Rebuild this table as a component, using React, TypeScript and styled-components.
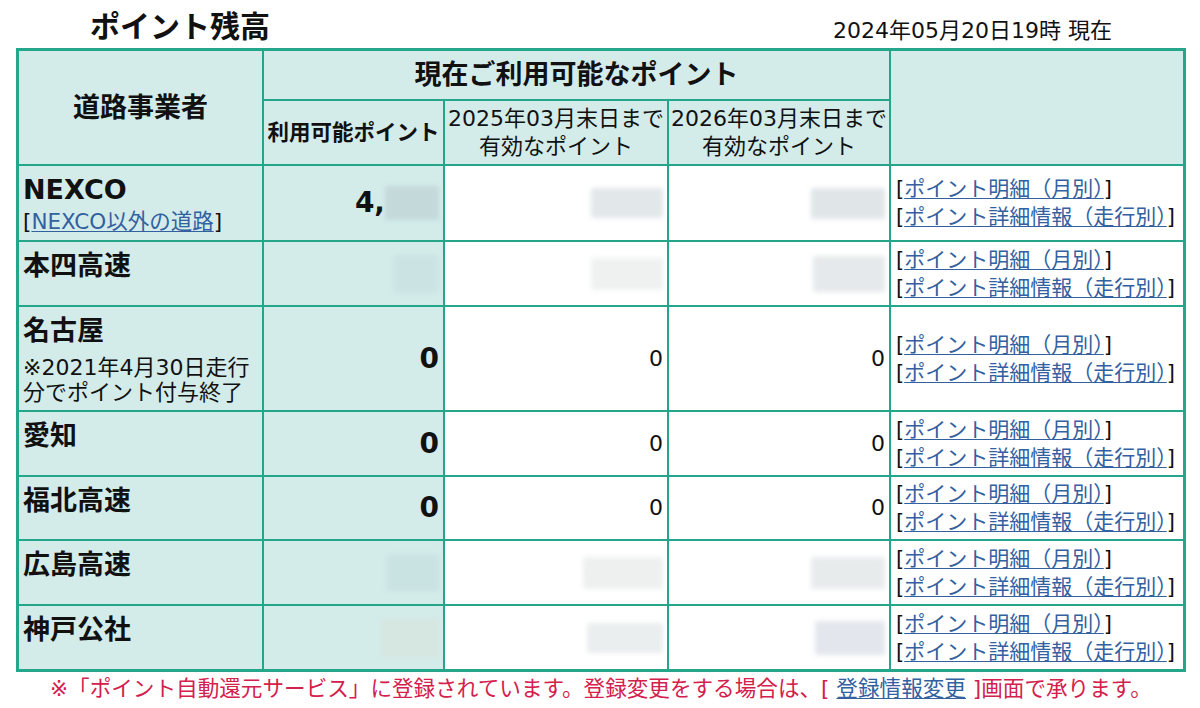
import React from 'react';
import styled, { createGlobalStyle } from 'styled-components';

const TEAL = '#25a68b';
const TINT = '#d3ecea';

const Global = createGlobalStyle`
  html, body { margin: 0; padding: 0; background: #fff; }
  body {
    font-family: "DejaVu Sans", "Noto Sans CJK JP", sans-serif;
    color: #111;
  }
`;

const Page = styled.div`
  width: 1170px;
  margin-left: 16px;
`;

const TitleBar = styled.header`
  height: 48px;
  box-sizing: border-box;
  padding: 0 74px;
  display: flex;
  justify-content: space-between;
  align-items: flex-start;
`;

const Title = styled.h1`
  margin: 6px 0 0;
  font-family: "Noto Sans CJK JP", sans-serif;
  font-size: 30px;
  line-height: 36px;
  font-weight: 700;
`;

const Stamp = styled.div`
  margin-top: 17px;
  font-size: 22px;
  line-height: 28px;
`;

const Grid = styled.div`
  display: grid;
  grid-template-columns: 245px 181px 224px 222px 292px;
  grid-template-rows: 50px 65px 76px 65px 105px 65px 64px 65px 63px;
  border: 3px solid ${TEAL};
  background: #fff;
`;

type CellProps = { $lastCol?: boolean; $lastRow?: boolean; $rows?: number; $cols?: number };

const CellBase = styled.div<CellProps>`
  box-sizing: border-box;
  min-width: 0;
  display: flex;
  flex-direction: column;
  border-right: ${p => (p.$lastCol ? 'none' : `2px solid ${TEAL}`)};
  border-bottom: ${p => (p.$lastRow ? 'none' : `2px solid ${TEAL}`)};
  ${p => (p.$rows ? `grid-row: span ${p.$rows};` : '')}
  ${p => (p.$cols ? `grid-column: span ${p.$cols};` : '')}
`;

const HeadCell = styled(CellBase)<{ $size?: number; $bold?: boolean }>`
  background: ${TINT};
  align-items: center;
  justify-content: center;
  text-align: center;
  font-size: ${p => p.$size ?? 22}px;
  font-weight: ${p => (p.$bold ? 700 : 400)};
  line-height: 28px;
  white-space: nowrap;
`;

const NameCell = styled(CellBase)`
  background: ${TINT};
  padding: 6px 4px 0 4px;
  justify-content: flex-start;
`;

const Name = styled.div`
  font-size: 27px;
  font-weight: 700;
  line-height: 36px;
  white-space: nowrap;
`;

const SubLink = styled.div`
  font-size: 21.5px;
  line-height: 28px;
  white-space: nowrap;
`;

const NameNote = styled.div`
  margin-top: 6px;
  font-size: 22px;
  line-height: 25px;
`;

const PointCell = styled(CellBase)`
  background: ${TINT};
  padding-right: 4px;
  flex-direction: row;
  align-items: center;
  justify-content: flex-end;
  font-size: 28px;
  font-weight: 700;
  line-height: 34px;
`;

const ExpiryCell = styled(CellBase)`
  background: #fff;
  padding-right: 4px;
  flex-direction: row;
  align-items: center;
  justify-content: flex-end;
  font-size: 22px;
  line-height: 28px;
`;

const LinkCell = styled(CellBase)`
  background: #fff;
  padding-left: 5px;
  justify-content: center;
`;

const LinkLine = styled.div`
  font-size: 21px;
  line-height: 28px;
  white-space: nowrap;
`;

const Anchor = styled.a`
  color: #33609f;
  text-decoration: underline;
  text-underline-offset: 2px;
  text-decoration-thickness: 1px;
`;

const Smudge = styled.span<{ $w: number; $h: number; $c: string }>`
  display: inline-block;
  flex: none;
  width: ${p => p.$w}px;
  height: ${p => p.$h}px;
  background: ${p => p.$c};
  filter: blur(2.5px);
  border-radius: 2px;
`;

const Note = styled.p`
  margin: 0;
  padding: 4px 0 0 34px;
  font-size: 21.6px;
  line-height: 26px;
  color: #d3204c;
  white-space: nowrap;
`;

type Blur = { w: number; h: number; c: string };
type Value = { text?: string; blur?: Blur };

type Row = {
  name: string;
  sub?: boolean;
  note?: string[];
  point: Value;
  y2025: Value;
  y2026: Value;
};

const ZERO: Value = { text: '0' };

const rows: Row[] = [
  {
    name: 'NEXCO',
    sub: true,
    point: { text: '4,', blur: { w: 54, h: 34, c: '#c4d9da' } },
    y2025: { blur: { w: 72, h: 30, c: '#e2e7e9' } },
    y2026: { blur: { w: 74, h: 31, c: '#e0e5e8' } },
  },
  {
    name: '本四高速',
    point: { blur: { w: 46, h: 38, c: '#cbe3e3' } },
    y2025: { blur: { w: 72, h: 32, c: '#eff1f1' } },
    y2026: { blur: { w: 72, h: 36, c: '#e6e9eb' } },
  },
  {
    name: '名古屋',
    note: ['※2021年4月30日走行', '分でポイント付与終了'],
    point: ZERO,
    y2025: ZERO,
    y2026: ZERO,
  },
  { name: '愛知', point: ZERO, y2025: ZERO, y2026: ZERO },
  { name: '福北高速', point: ZERO, y2025: ZERO, y2026: ZERO },
  {
    name: '広島高速',
    point: { blur: { w: 52, h: 36, c: '#c9e2e2' } },
    y2025: { blur: { w: 80, h: 32, c: '#eef0f0' } },
    y2026: { blur: { w: 74, h: 32, c: '#e8ebec' } },
  },
  {
    name: '神戸公社',
    point: { blur: { w: 58, h: 38, c: '#d6e6e0' } },
    y2025: { blur: { w: 76, h: 30, c: '#ebeeee' } },
    y2026: { blur: { w: 70, h: 34, c: '#e3e6ec' } },
  },
];

const ValueContent: React.FC<{ v: Value }> = ({ v }) => (
  <>
    {v.text && <span>{v.text}</span>}
    {v.blur && <Smudge $w={v.blur.w} $h={v.blur.h} $c={v.blur.c} />}
  </>
);

export default function App() {
  return (
    <>
      <Global />
      <Page>
        <TitleBar>
          <Title>ポイント残高</Title>
          <Stamp>2024年05月20日19時 現在</Stamp>
        </TitleBar>
        <Grid>
          <HeadCell $rows={2} $size={27} $bold>
            道路事業者
          </HeadCell>
          <HeadCell $cols={3} $size={27} $bold>
            現在ご利用可能なポイント
          </HeadCell>
          <HeadCell $rows={2} $lastCol />
          <HeadCell $size={21.5} $bold>
            利用可能ポイント
          </HeadCell>
          <HeadCell>
            <div>2025年03月末日まで</div>
            <div>有効なポイント</div>
          </HeadCell>
          <HeadCell>
            <div>2026年03月末日まで</div>
            <div>有効なポイント</div>
          </HeadCell>

          {rows.map((r, i) => {
            const last = i === rows.length - 1;
            return (
              <React.Fragment key={r.name}>
                <NameCell $lastRow={last}>
                  <Name>{r.name}</Name>
                  {r.sub && (
                    <SubLink>
                      [<Anchor href="#">NEXCO以外の道路</Anchor>]
                    </SubLink>
                  )}
                  {r.note && (
                    <NameNote>
                      {r.note.map(n => (
                        <div key={n}>{n}</div>
                      ))}
                    </NameNote>
                  )}
                </NameCell>
                <PointCell $lastRow={last}>
                  <ValueContent v={r.point} />
                </PointCell>
                <ExpiryCell $lastRow={last}>
                  <ValueContent v={r.y2025} />
                </ExpiryCell>
                <ExpiryCell $lastRow={last}>
                  <ValueContent v={r.y2026} />
                </ExpiryCell>
                <LinkCell $lastRow={last} $lastCol>
                  <LinkLine>
                    [<Anchor href="#">ポイント明細（月別）</Anchor>]
                  </LinkLine>
                  <LinkLine>
                    [<Anchor href="#">ポイント詳細情報（走行別）</Anchor>]
                  </LinkLine>
                </LinkCell>
              </React.Fragment>
            );
          })}
        </Grid>
        <Note>
          ※「ポイント自動還元サービス」に登録されています。登録変更をする場合は、[ <Anchor href="#">登録情報変更</Anchor> ]画面で承ります。
        </Note>
      </Page>
    </>
  );
}
